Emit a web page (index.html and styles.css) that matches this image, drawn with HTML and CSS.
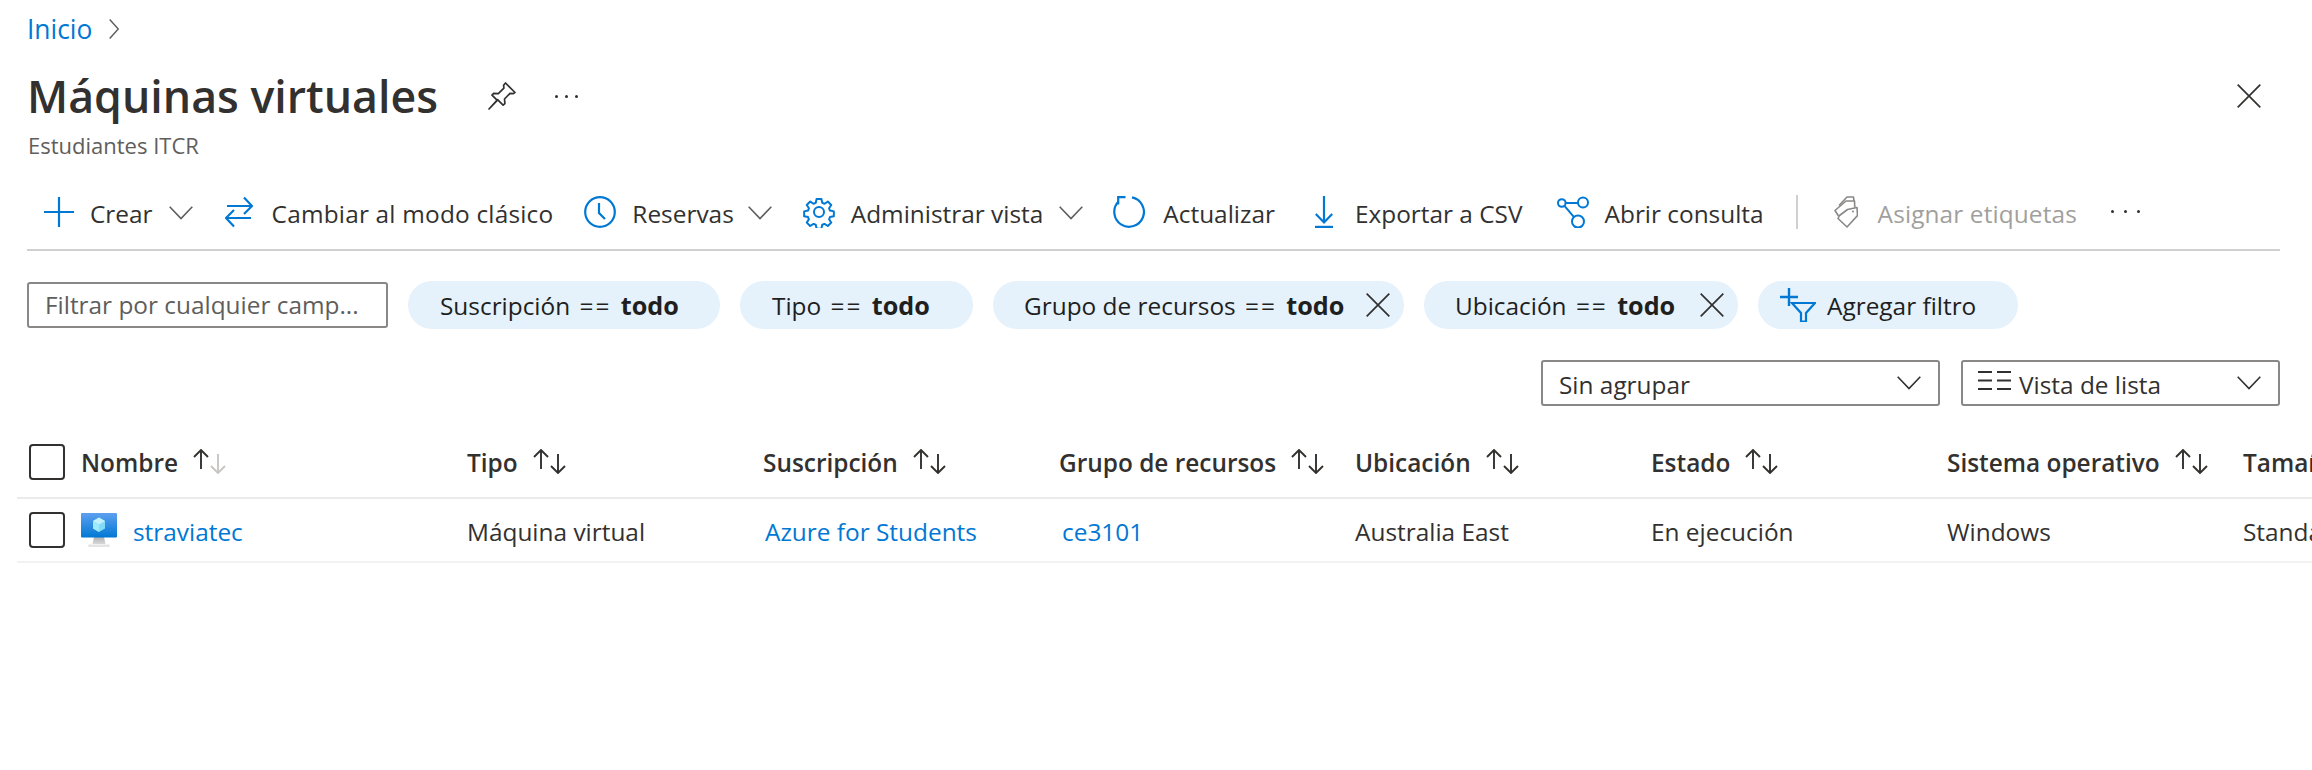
FILE: index.html
```html
<!DOCTYPE html>
<html lang="es">
<head>
<meta charset="utf-8">
<title>Máquinas virtuales</title>
<link rel="stylesheet" href="styles.css">
</head>
<body>
<svg class="defs" width="0" height="0" aria-hidden="true">
  <symbol id="chev" viewBox="0 0 24 14"><path d="M.7.7 12 12.6 23.3.7" fill="none" stroke="currentColor" stroke-width="1.6"/></symbol>
  <symbol id="x" viewBox="0 0 24 24"><path d="M.7.7l22.6 22.6M23.3.7.7 23.3" fill="none" stroke="currentColor" stroke-width="1.7"/></symbol>
  <symbol id="up" viewBox="0 0 16 20"><path d="M8 20V1M1 8l7-7 7 7" fill="none" stroke="currentColor" stroke-width="1.9"/></symbol>
  <symbol id="down" viewBox="0 0 16 20"><path d="M8 0v19M1 12l7 7 7-7" fill="none" stroke="currentColor" stroke-width="1.9"/></symbol>
</svg>

<nav class="crumb"><a class="link" href="#">Inicio</a>
  <svg class="crumb-chev" width="10" height="20" viewBox="0 0 10 20"><path d="M.7.5 9.300 10 .7 19.500" fill="none" stroke="#605e5c" stroke-width="1.500"/></svg>
</nav>

<header class="title-row">
  <h1>Máquinas virtuales</h1>
  <svg class="pin" width="28" height="28" viewBox="0 0 28 28"><path d="M17.500 1 27 10.500l-2 1.200-3-.3-5.500 5.600.4 4.600-1.800 1.600-5.500-5.500L1 27l8.300-8.600-5.300-5.300 1.700-1.800 4.600.4 5.600-5.500-.3-3z" fill="none" stroke="#323130" stroke-width="1.700" stroke-linejoin="round"/></svg>
  <span class="dots title-dots"><i></i><i></i><i></i></span>
  <svg class="close" width="24" height="24"><use href="#x"/></svg>
</header>
<p class="subtitle">Estudiantes ITCR</p>

<div class="toolbar">
  <button class="tool">
    <svg width="30" height="30" viewBox="0 0 30 30"><path d="M15 0v30M0 15h30" stroke="#0078d4" stroke-width="2.200"/></svg>
    <span>Crear</span><svg class="chev" width="24" height="14"><use href="#chev"/></svg>
  </button>
  <button class="tool tool-swap">
    <svg width="28" height="32" viewBox="0 0 28 32"><path d="M2 10h25M19 1.500 27 10l-8 8M26 22H1M9 14l-8 8 8 8.500" fill="none" stroke="#0078d4" stroke-width="2.200"/></svg>
    <span>Cambiar al modo clásico</span>
  </button>
  <button class="tool tool-res">
    <svg width="32" height="32" viewBox="0 0 32 32"><circle cx="16" cy="16" r="14.800" fill="none" stroke="#0078d4" stroke-width="2.200"/><path d="M15 7v10l6 6" fill="none" stroke="#0078d4" stroke-width="2.200"/></svg>
    <span>Reservas</span><svg class="chev" width="24" height="14"><use href="#chev"/></svg>
  </button>
  <button class="tool tool-admin">
    <svg width="32" height="32" viewBox="0 0 32 32"><path d="M13.300 1.500h5.400l.9 4.300 2.500 1 3.700-2.400 3.800 3.800-2.400 3.700 1 2.500 4.300.9v5.400l-4.300.9-1 2.500 2.400 3.700-3.800 3.800-3.700-2.400-2.500 1-.9 4.300h-5.400l-.9-4.300-2.500-1-3.700 2.400-3.800-3.800 2.400-3.700-1-2.500-4.300-.9v-5.400l4.300-.9 1-2.500-2.400-3.700 3.800-3.800 3.700 2.400 2.500-1z" transform="translate(1.600 1.600) scale(.9)" fill="none" stroke="#0078d4" stroke-width="2.200" stroke-linejoin="round"/><circle cx="16" cy="16" r="5" fill="none" stroke="#0078d4" stroke-width="2"/></svg>
    <span>Administrar vista</span><svg class="chev" width="24" height="14"><use href="#chev"/></svg>
  </button>
  <button class="tool tool-refresh">
    <svg width="32" height="32" viewBox="0 0 32 32"><path d="M19 1.400A14.800 14.800 0 1 1 5.500 5.600" fill="none" stroke="#0078d4" stroke-width="2.200"/><path d="M12.500 1.200H5.200V8.500" fill="none" stroke="#0078d4" stroke-width="2.200"/></svg>
    <span>Actualizar</span>
  </button>
  <button class="tool tool-export">
    <svg width="18" height="32" viewBox="0 0 18 32"><path d="M9 0v26.500M.8 18 9 26.500 17.200 18" fill="none" stroke="#0078d4" stroke-width="2.200"/><path d="M0 31h18" stroke="#0078d4" stroke-width="2.400"/></svg>
    <span>Exportar a CSV</span>
  </button>
  <button class="tool">
    <svg width="32" height="32" viewBox="0 0 32 32"><circle cx="4.800" cy="7" r="3.800" fill="none" stroke="#0078d4" stroke-width="2"/><circle cx="26" cy="6.500" r="5" fill="none" stroke="#0078d4" stroke-width="2"/><circle cx="21" cy="25.500" r="6" fill="none" stroke="#0078d4" stroke-width="2"/><path d="M8.600 7h12.400M7.500 9.800l9.300 11" fill="none" stroke="#0078d4" stroke-width="2"/></svg>
    <span>Abrir consulta</span>
  </button>
  <span class="divider"></span>
  <button class="tool tool-off">
    <svg width="24" height="32" viewBox="0 0 24 32"><path d="M13.500 13.500 23 11.500l.5 8L13 31l-9-8.500 1.500-3z" fill="none" stroke="#8a8886" stroke-width="1.600" stroke-linejoin="round"/><path d="M4.500 20 1 14.500 12 5l8.500 0 .3 6.500" fill="none" stroke="#8a8886" stroke-width="1.600" stroke-linejoin="round"/><path d="M5 9.500 13 1h6.500l.5 4" fill="none" stroke="#8a8886" stroke-width="1.600" stroke-linejoin="round"/><circle cx="19" cy="15.500" r="1" fill="#8a8886"/></svg>
    <span>Asignar etiquetas</span>
  </button>
  <span class="dots tool-dots"><i></i><i></i><i></i></span>
</div>

<div class="filters">
  <div class="search">Filtrar por cualquier camp...</div>
  <div class="pill p-sub"><span>Suscripción <span class="eq">==</span> <b>todo</b></span></div>
  <div class="pill p-tipo"><span>Tipo <span class="eq">==</span> <b>todo</b></span></div>
  <div class="pill p-x p-grupo"><span>Grupo de recursos <span class="eq">==</span> <b>todo</b></span><svg width="24" height="24"><use href="#x"/></svg></div>
  <div class="pill p-x p-ubi"><span>Ubicación <span class="eq">==</span> <b>todo</b></span><svg width="24" height="24"><use href="#x"/></svg></div>
  <div class="pill p-add">
    <svg width="36" height="34" viewBox="0 0 36 34"><path d="M9 0v18M0 9h18" stroke="#0078d4" stroke-width="2.400"/><path d="M12 15h23l-9 10v8.500h-5V25z" fill="none" stroke="#0078d4" stroke-width="2.200"/></svg>
    <span>Agregar filtro</span>
  </div>
</div>

<div class="views">
  <div class="select s-group"><span>Sin agrupar</span><svg class="sel-chev" width="26" height="14"><use href="#chev"/></svg></div>
  <div class="select s-view">
    <svg class="list-icon" width="33" height="19" viewBox="0 0 33 19"><path d="M0 1h14M19 1h14M0 9.500h14M19 9.500h14M0 18h14M19 18h14" stroke="#323130" stroke-width="2"/></svg>
    <span>Vista de lista</span><svg class="sel-chev" width="26" height="14"><use href="#chev"/></svg>
  </div>
</div>

<section class="table">
  <div class="row head">
    <span class="check"></span>
    <span class="th"><span>Nombre</span> <span class="sort"><svg class="up" width="16" height="20"><use href="#up"/></svg><svg class="down off" width="16" height="20"><use href="#down"/></svg></span></span>
    <span class="th"><span>Tipo</span> <span class="sort"><svg class="up" width="16" height="20"><use href="#up"/></svg><svg class="down" width="16" height="20"><use href="#down"/></svg></span></span>
    <span class="th"><span>Suscripción</span> <span class="sort"><svg class="up" width="16" height="20"><use href="#up"/></svg><svg class="down" width="16" height="20"><use href="#down"/></svg></span></span>
    <span class="th"><span>Grupo de recursos</span> <span class="sort"><svg class="up" width="16" height="20"><use href="#up"/></svg><svg class="down" width="16" height="20"><use href="#down"/></svg></span></span>
    <span class="th"><span>Ubicación</span> <span class="sort"><svg class="up" width="16" height="20"><use href="#up"/></svg><svg class="down" width="16" height="20"><use href="#down"/></svg></span></span>
    <span class="th"><span>Estado</span> <span class="sort"><svg class="up" width="16" height="20"><use href="#up"/></svg><svg class="down" width="16" height="20"><use href="#down"/></svg></span></span>
    <span class="th"><span>Sistema operativo</span> <span class="sort"><svg class="up" width="16" height="20"><use href="#up"/></svg><svg class="down" width="16" height="20"><use href="#down"/></svg></span></span>
    <span class="th th-last"><span>Tamaño</span></span>
  </div>
  <div class="row body">
    <span class="check"></span>
    <span class="name">
      <svg class="vm" width="36" height="34" viewBox="0 0 36 34">
        <defs>
          <linearGradient id="vmscreen" x1="0" y1="0" x2="0" y2="1"><stop offset="0" stop-color="#5ea0ef"/><stop offset="1" stop-color="#0078d4"/></linearGradient>
          <linearGradient id="vmstand" x1="0" y1="0" x2="0" y2="1"><stop offset="0" stop-color="#b0b0b0"/><stop offset="1" stop-color="#d8d8d8"/></linearGradient>
        </defs>
        <path d="M13 24h10l1.500 7h-13z" fill="url(#vmstand)"/>
        <path d="M9 31.500h18a1 1 0 0 1 1 2.500H8a1 1 0 0 1 1-2.500z" fill="#e4e4e4"/>
        <rect width="36" height="24.500" rx="1" fill="url(#vmscreen)"/>
        <path d="M18 4.500 24 8v7.500L18 19l-6-3.500V8z" fill="#83dcf5"/>
        <path d="M18 4.500 24 8l-6 3.500L12 8z" fill="#c3f1fc"/>
        <path d="M18 11.500V19l-6-3.500V8z" fill="#9cebff"/>
      </svg>
      <a class="link" href="#">straviatec</a>
    </span>
    <span class="cell">Máquina virtual</span>
    <a class="cell link inset" href="#">Azure for Students</a>
    <a class="cell link inset2" href="#">ce3101</a>
    <span class="cell">Australia East</span>
    <span class="cell">En ejecución</span>
    <span class="cell">Windows</span>
    <span class="cell">Standard_B2s</span>
  </div>
</section>
</body>
</html>
```
FILE: styles.css
```css
* { box-sizing: border-box; }
html, body { margin: 0; padding: 0; }
body {
  width: 2312px;
  height: 770px;
  overflow: hidden;
  background: #fff;
  color: #323130;
  font-family: "Open Sans", "Noto Sans", sans-serif;
  font-size: 24.4px;
}
.defs { position: absolute; }
.link { color: #0078d4; text-decoration: none; }

.crumb { height: 58px; padding-left: 27px; display: flex; align-items: center; font-size: 26.4px; }
.crumb-chev { margin-left: 17px; }

.title-row { height: 72px; padding-left: 27px; margin-top: 2px; display: flex; align-items: center; position: relative; }
h1 { margin: 0; width: 461px; font-size: 44.7px; font-weight: 600; line-height: 1; white-space: nowrap; }
.pin { display: block; }
.title-dots { margin-left: 39px; }
.close { position: absolute; left: 2237px; top: 24px; color: #323130; }
.subtitle { margin: -1px 0 0; height: 28px; padding-left: 28px; font-size: 22px; line-height: 28px; color: #605e5c; }

.dots { display: inline-flex; gap: 7px; }
.dots i { width: 3px; height: 3px; border-radius: 50%; background: #323130; }

.toolbar {
  height: 77px;
  margin: 15px 32px 0 27px;
  padding-left: 17px;
  display: flex;
  align-items: center;
  border-bottom: 2px solid #d2d0ce;
  white-space: nowrap;
}
.tool {
  display: flex;
  align-items: center;
  gap: 16px;
  margin-right: 32px;
  padding: 0;
  border: 0;
  background: none;
  color: inherit;
  font: inherit;
}
.tool span { padding-top: 3px; }
.tool svg { display: block; flex: none; }
.tool .chev { color: #605e5c; margin-top: 3px; }
.tool-swap { gap: 19px; margin-right: 31px; }
.tool-swap span { letter-spacing: .2px; }
.tool-res { margin-right: 31px; }
.tool-res .chev { margin-left: -2px; }
.tool-admin { margin-right: 30px; }
.tool-refresh { gap: 18px; }
.tool-export { margin-left: 8px; gap: 22px; margin-right: 34px; }
.tool-off { color: #a19f9d; gap: 20px; }
.tool-off span { letter-spacing: .12px; }
.divider { width: 2px; height: 34px; background: #d2d0ce; margin: 0 36px 0 0; }
.tool-dots { margin-left: 2px; gap: 10px; }

.filters { height: 48px; margin: 30px 0 0 27px; display: flex; align-items: center; gap: 20px; white-space: nowrap; }
.search {
  width: 361px;
  height: 46px;
  padding-left: 16px;
  border: 2px solid #8a8886;
  border-radius: 3px;
  line-height: 42px;
  color: #605e5c;
}
.pill {
  height: 48px;
  border-radius: 24px;
  background: #e5f1fb;
  display: flex;
  align-items: center;
  gap: 6px;
  color: #201f1e;
  padding-left: 32px;
}
.pill .eq { margin: 0 3px; letter-spacing: 2px; }
.pill b { font-weight: 700; font-size: 25.2px; }
.pill svg { display: block; color: #323130; flex: none; }
.p-sub { width: 312px; }
.p-tipo { width: 233px; }
.p-grupo { width: 411px; justify-content: space-between; padding-right: 14px; padding-left: 31px; }
.p-ubi { width: 314px; justify-content: space-between; padding-right: 14px; padding-left: 31px; }
.p-add { width: 260px; padding-left: 22px; gap: 11px; }

.views { height: 46px; margin: 31px 32px 0 0; display: flex; justify-content: flex-end; gap: 21px; }
.select {
  height: 46px;
  border: 2px solid #8a8886;
  border-radius: 3px;
  display: flex;
  align-items: center;
  color: #323130;
}
.select span { flex: 1; padding-top: 2px; }
.s-group { width: 399px; padding: 0 16px; }
.s-view { width: 319px; padding: 0 16px 0 15px; }
.list-icon { margin-right: 8px; margin-bottom: 6px; }
.sel-chev { color: #323130; flex: none; }

.table { margin: 20px 0 0 17px; }
.row {
  display: grid;
  grid-template-columns: 52px 386px repeat(7, 296px);
  padding-left: 12px;
  align-items: center;
  white-space: nowrap;
}
.head { height: 73px; border-bottom: 2px solid #edebe9; }
.body { height: 64px; border-bottom: 2px solid #f3f2f1; }
.check { width: 36px; height: 36px; border: 2px solid #323130; border-radius: 4px; }
.th { font-weight: 600; display: flex; align-items: center; gap: 15px; }
.th > span:first-child { padding-top: 1px; }
.sort { display: flex; align-items: flex-start; color: #323130; height: 25px; gap: 1px; }
.sort svg { display: block; }
.sort .down { margin-top: 5px; }
.sort .off { color: #c8c6c4; }
.name { display: flex; align-items: center; gap: 16px; }
.name .link { padding-top: 3px; }
.vm { display: block; }
.cell { padding-top: 3px; }
.inset { padding-left: 2px; }
.inset2 { padding-left: 3px; }
```
